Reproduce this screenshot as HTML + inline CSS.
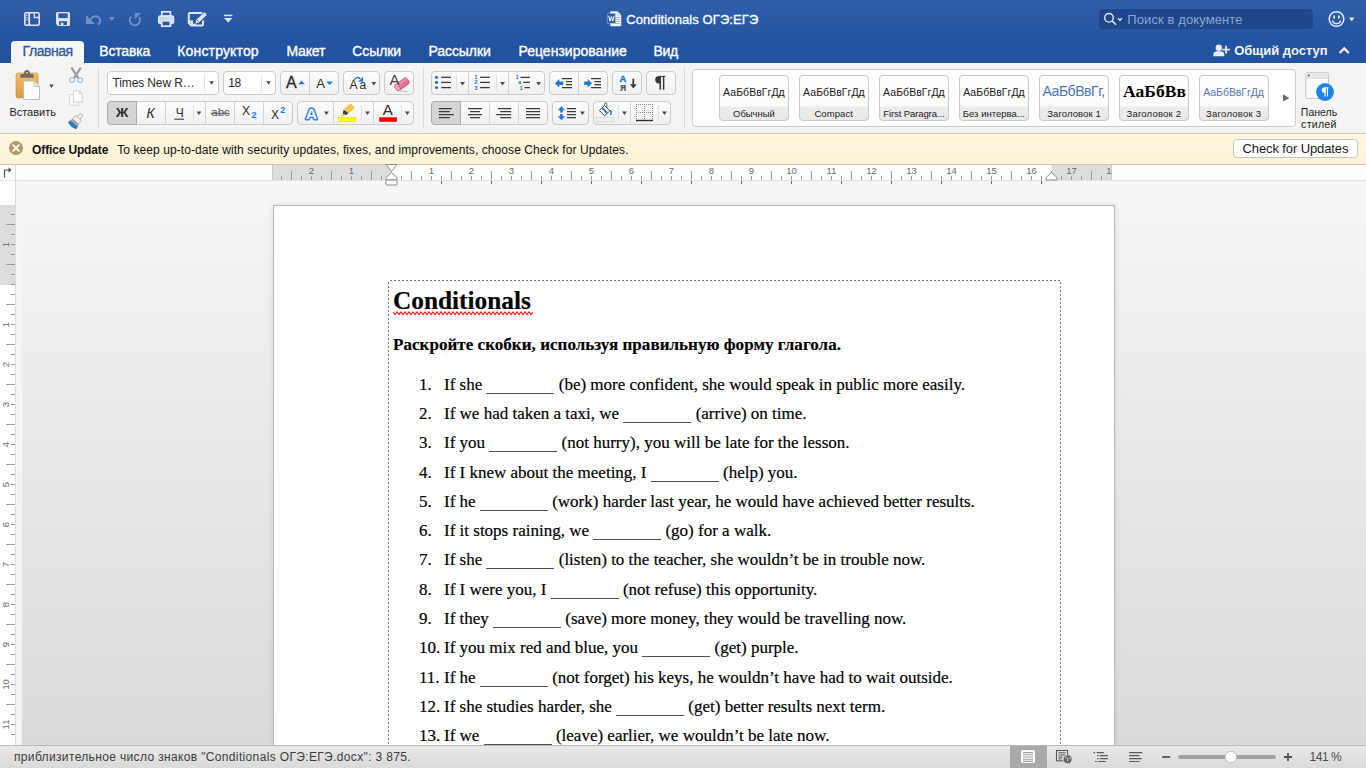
<!DOCTYPE html>
<html><head><meta charset="utf-8"><title>Conditionals</title>
<style>
*{box-sizing:border-box;margin:0;padding:0}
html,body{width:1366px;height:768px;overflow:hidden;background:#e6e6e6;font-family:"Liberation Sans",sans-serif;}
#root>div,#root>svg{position:absolute}
#root{position:relative;width:1366px;height:768px;overflow:hidden}
#titlebar{left:0;top:0;width:1366px;height:63px;background:linear-gradient(#2f5fa9 0,#2a5aa5 20px,#2354a1 40px,#2052a0 63px)}
.t{position:absolute;white-space:nowrap;line-height:1}
.tab{color:#fff;font-size:14px;top:44px;-webkit-text-stroke:0.35px #fff}
#tabactive{left:11px;top:41px;width:73px;height:23px;background:#f6f6f6;border-radius:4px 4px 0 0}
#ribbon{left:0;top:63px;width:1366px;height:70px;background:#f4f4f4}
#ribbonline{left:0;top:133px;width:1366px;height:1px;background:#cacaca}
#update{left:0;top:134px;width:1366px;height:30px;background:linear-gradient(#fff8dd,#fbf2d8)}
#updateline{left:0;top:164px;width:1366px;height:1px;background:#cdc5af}
#hruler{left:0;top:165px;width:1366px;height:16px;background:#fdfdfd;border-bottom:1px solid #e2e2e2}
#docarea{left:0;top:181px;width:1366px;height:564px;background:linear-gradient(#f6f6f6,#dadada)}
#page{left:273px;top:205px;width:842px;height:560px;background:#fff;border:1px solid #b8b8b8;border-bottom:none;box-shadow:0 0 7px rgba(0,0,0,0.10)}
#status{left:0;top:745px;width:1366px;height:23px;background:linear-gradient(#e8e8e8,#dadada);border-top:1px solid #b8b8b8}
.doc{font-family:"Liberation Serif",serif;color:#000;-webkit-text-stroke:0.18px #000}
.u{display:inline-block;width:68px;height:1.4px;background:#505050;vertical-align:-4.4px}

.g{background:linear-gradient(#fdfdfd,#f0f0f0);border:1px solid #cbcbcb;border-radius:4px}
.g1{top:71px;height:24px}
.g2{top:101px;height:24px}
.sel{background:#d5d5d5;border:1px solid #ababab}
.vd{width:1px;background:#d3d3d3}
.vl{width:1px;background:#e2e2e2}
.sep{top:68px;width:1px;height:61px;background:#dadada}
.rt{color:#2a2a2a}
.sc{top:75px;width:70px;height:46px;border:1px solid #c9c9c9;border-radius:4px;background:linear-gradient(#fff 0,#fbfbfb 30px,#ececec 31px,#e9e9e9 100%);overflow:hidden}
</style></head><body>
<div id="root" class="abs">
<!-- TITLEBAR -->
<div id="titlebar"></div>
<div id="ribbonline"></div>
<div id="update"></div>
<div id="updateline"></div>
<div id="hruler"></div>
<div id="docarea"></div>
<div id="page"></div>
<div id="tabactive"></div>
<svg id="tbicons" width="1366" height="63" viewBox="0 0 1366 63" style="left:0;top:0">
<g fill="none" stroke="#dfe6f2" stroke-width="1.6">
<!-- sidebar/doc icon -->
<rect x="24.8" y="12.800" width="14.400" height="12.400" rx="1.500"/>
<path d="M29.200 13v12" stroke-width="1.800"/>
<path d="M34.300 13.200v4.300h4.600" stroke-width="1.300"/>
</g>
<g fill="#dfe6f2"><rect x="26.200" y="14.500" width="1.300" height="1.300"/><rect x="26.200" y="16.800" width="1.300" height="1.300"/><rect x="26.200" y="19.100" width="1.300" height="1.300"/></g>
<!-- save -->
<path d="M57.500 12h11a1.500 1.500 0 0 1 1.500 1.500v11a1.500 1.500 0 0 1-1.500 1.500h-10.500l-2-2v-10.500a1.500 1.500 0 0 1 1.500-1.500z" fill="#dfe6f2"/>
<rect x="58.400" y="13.300" width="9.300" height="4.800" fill="#2c5ca7"/>
<rect x="59" y="21.200" width="8" height="3.900" fill="#2c5ca7"/>
<rect x="60.800" y="22.700" width="2.600" height="2.400" fill="#dfe6f2"/>
<!-- undo (dim) -->
<g fill="none" stroke="#7090c7" stroke-width="2">
<path d="M90.500 19.500c1.500-3 5.500-4.200 8-2.200c2.600 2 2.200 5.600-.8 7.200"/>
</g>
<path d="M86 15v9h9z" fill="#7090c7"/>
<path d="M109 17h5.600l-2.800 4z" fill="#7090c7"/>
<!-- redo (dim) -->
<path d="M131.200 16.600a5.100 5.100 0 1 0 7.800 0.500" fill="none" stroke="#7090c7" stroke-width="2"/>
<path d="M134.900 13.100h6.100l-6.100 5.800z" fill="#7090c7"/>
<!-- print -->
<g fill="none" stroke="#dfe6f2" stroke-width="1.700">
<rect x="161.800" y="11.800" width="8.600" height="4.400"/>
<path d="M161.500 23.300h-1.500a1.200 1.200 0 0 1-1.200-1.200v-4.600a1.300 1.300 0 0 1 1.300-1.300h12a1.300 1.300 0 0 1 1.300 1.300v4.600a1.200 1.200 0 0 1-1.200 1.200h-1.500" fill="#cdd7ea"/>
<rect x="161.800" y="20.800" width="8.600" height="5.400" fill="#2b5ba6"/>
</g>
<!-- edit -->
<path d="M202.500 13h-12.500a1.200 1.200 0 0 0-1.200 1.200v8.800l2.500 2.500h10.500a1.200 1.200 0 0 0 1.200-1.200v-3.800" fill="none" stroke="#dfe6f2" stroke-width="2"/>
<path d="M188.500 20.500h4.500v5.500z" fill="#dfe6f2"/>
<path d="M194.800 24.200l0.800-4.200l7.700-7.500a1.400 1.400 0 0 1 2 0l1.200 1.200a1.400 1.400 0 0 1 0 2l-7.700 7.500z" fill="#dfe6f2" stroke="#2b5ba6" stroke-width="1"/>
<path d="M196.600 19.800l2.600 2.600" stroke="#2b5ba6" stroke-width="0.800"/>
<path d="M192.500 24.500h3.500" stroke="#dfe6f2" stroke-width="1.500"/>
<!-- dropdown -->
<rect x="224" y="14.700" width="8.400" height="1.500" fill="#dfe6f2"/>
<path d="M224 18h8.400l-4.200 4.600z" fill="#dfe6f2"/>
<!-- word doc icon -->
<path d="M610.500 11.500h7l3.500 3.500v11h-10.500z" fill="#fff" stroke="#c9d3e6" stroke-width="0.600"/>
<path d="M617.500 11.500v3.500h3.500" fill="#e4e9f2" stroke="#9fb0cf" stroke-width="0.600"/>
<g stroke="#8d99ad" stroke-width="0.800"><path d="M615 17.500h5M615 19.500h5M615 21.500h5M615 23.500h5"/></g>
<rect x="607.300" y="13.300" width="8.200" height="10.200" rx="0.800" fill="#2b5baa" stroke="#dfe6f2" stroke-width="0.400"/>
<path d="M608.700 15.800l1.300 5.400l1.400-4.600l1.400 4.600l1.300-5.400" fill="none" stroke="#fff" stroke-width="1"/>
<!-- search box -->
<rect x="1099" y="9" width="214" height="20" rx="4" fill="#20478b"/>
<circle cx="1109" cy="17.800" r="4.300" fill="none" stroke="#e6ebf5" stroke-width="1.400"/>
<path d="M1112.200 21l3.800 3.800" stroke="#e6ebf5" stroke-width="1.600"/>
<path d="M1118 18.300l2 2l2-2" fill="none" stroke="#e6ebf5" stroke-width="1.300"/>
<!-- smiley -->
<circle cx="1336.500" cy="19" r="7.300" fill="none" stroke="#e6ebf5" stroke-width="1.500"/>
<rect x="1333.300" y="15.300" width="1.700" height="3.600" rx="0.800" fill="#e6ebf5"/>
<rect x="1338" y="15.300" width="1.700" height="3.600" rx="0.800" fill="#e6ebf5"/>
<path d="M1332.300 20.600a4.400 4.400 0 0 0 8.400 0" fill="none" stroke="#e6ebf5" stroke-width="1.400"/>
<path d="M1349 17.400h5.400l-2.700 3.800z" fill="#e6ebf5"/>
<!-- share person+ -->
<circle cx="1218.800" cy="47.800" r="3.200" fill="#e6ebf5"/>
<path d="M1213.300 56.200v-1.700c0-2.300 2-3.300 3.800-3.300h3.400c1.800 0 3.800 1 3.800 3.300v1.700z" fill="#e6ebf5"/>
<path d="M1226.100 45.800v7.600M1222.300 49.600h7.600" stroke="#e6ebf5" stroke-width="1.800"/>
<!-- caret -->
<path d="M1339.600 53l4.600-4.600l4.600 4.600" fill="none" stroke="#f2f5fa" stroke-width="2.200"/>
</svg>
<div class="t" id="ttl" style="left:626.2px;top:12.7px;font-size:13px;color:#fff;-webkit-text-stroke:0.3px #fff;letter-spacing:0.094px">Conditionals ОГЭ:ЕГЭ</div>
<div class="t" id="srch" style="left:1127.3px;top:12.500px;font-size:13px;color:#8fa5cb;letter-spacing:0.103px">Поиск в документе</div>
<div class="t tab" id="tab1" style="left:22.6px;color:#2b579a;-webkit-text-stroke:0.3px #2b579a;letter-spacing:-0.457px">Главная</div>
<div class="t tab" id="tab2" style="left:99.3px;letter-spacing:-0.178px">Вставка</div>
<div class="t tab" id="tab3" style="left:177.3px;letter-spacing:0.152px">Конструктор</div>
<div class="t tab" id="tab4" style="left:286.4px;letter-spacing:-0.145px">Макет</div>
<div class="t tab" id="tab5" style="left:352.2px;letter-spacing:-0.066px">Ссылки</div>
<div class="t tab" id="tab6" style="left:428.4px;letter-spacing:-0.055px">Рассылки</div>
<div class="t tab" id="tab7" style="left:518.4px;letter-spacing:0.021px">Рецензирование</div>
<div class="t tab" id="tab8" style="left:653.4px;letter-spacing:-0.276px">Вид</div>
<div class="t" id="share" style="left:1234.3px;top:44px;font-size:13px;font-weight:bold;color:#f2f5fa;letter-spacing:-0.036px">Общий доступ</div>
<!-- RIBBON -->
<div id="ribbon"></div>
<div class="g g1" style="left:107px;width:112px;background:#fff"></div>
<div class="g g1" style="left:223px;width:53px;background:#fff"></div>
<div class="g g1" style="left:280px;width:59px"></div>
<div class="g g1" style="left:343px;width:37px"></div>
<div class="g g1" style="left:384px;width:30px"></div>
<div class="g g1" style="left:431px;width:114px"></div>
<div class="g g1" style="left:549px;width:59px"></div>
<div class="g g1" style="left:612px;width:30px"></div>
<div class="g g1" style="left:646px;width:30px"></div>
<div class="g g2" style="left:107px;width:186px"></div>
<div class="g g2" style="left:297px;width:117px"></div>
<div class="g g2" style="left:431px;width:117px"></div>
<div class="g g2" style="left:552px;width:37px"></div>
<div class="g g2" style="left:593px;width:78px"></div>
<div class="sel" style="left:107px;top:101px;width:30px;height:24px;border-radius:4px 0 0 4px"></div>
<div class="sel" style="left:431px;top:101px;width:30px;height:24px;border-radius:4px 0 0 4px"></div>
<div class="vd" style="left:309px;top:72px;height:22px"></div>
<div class="vd" style="left:468px;top:72px;height:22px"></div>
<div class="vd" style="left:508px;top:72px;height:22px"></div>
<div class="vd" style="left:578px;top:72px;height:22px"></div>
<div class="vl" style="left:204px;top:75px;height:16px"></div>
<div class="vl" style="left:261px;top:75px;height:16px"></div>
<div class="vl" style="left:456px;top:75px;height:16px"></div>
<div class="vl" style="left:496px;top:75px;height:16px"></div>
<div class="vd" style="left:165px;top:102px;height:22px"></div>
<div class="vd" style="left:205px;top:102px;height:22px"></div>
<div class="vd" style="left:234px;top:102px;height:22px"></div>
<div class="vd" style="left:263px;top:102px;height:22px"></div>
<div class="vd" style="left:333px;top:102px;height:22px"></div>
<div class="vd" style="left:373px;top:102px;height:22px"></div>
<div class="vd" style="left:489px;top:102px;height:22px"></div>
<div class="vd" style="left:518px;top:102px;height:22px"></div>
<div class="vd" style="left:630px;top:102px;height:22px"></div>
<div class="vl" style="left:193px;top:105px;height:16px"></div>
<div class="vl" style="left:361px;top:105px;height:16px"></div>
<div class="vl" style="left:401px;top:105px;height:16px"></div>
<div class="vl" style="left:618px;top:105px;height:16px"></div>
<div class="vl" style="left:658px;top:105px;height:16px"></div>
<div class="sep" style="left:98px"></div>
<div class="sep" style="left:423px"></div>
<div class="sep" style="left:684px"></div>
<div style="left:692px;top:69px;width:604px;height:58px;background:#fff;border:1px solid #cfcfcf;border-radius:4px"></div>
<div class="sc" style="left:719px"></div>
<div class="sc" style="left:799px"></div>
<div class="sc" style="left:879px"></div>
<div class="sc" style="left:959px"></div>
<div class="sc" style="left:1039px"></div>
<div class="sc" style="left:1119px"></div>
<div class="sc" style="left:1199px"></div>
<svg id="rbicons" width="1366" height="165" viewBox="0 0 1366 165" style="left:0;top:0">
<defs><linearGradient id="gor" x1="0" y1="0" x2="0" y2="1"><stop offset="0" stop-color="#f3bd66"/><stop offset="1" stop-color="#dc9a3c"/></linearGradient></defs>
<rect x="16" y="73" width="22" height="25" rx="2" fill="url(#gor)" stroke="#d08f34" stroke-width="0.6"/>
<path d="M20.300 77.800v-2.200a1.600 1.600 0 0 1 1.600-1.600h2.200v-1a2.900 2.900 0 0 1 5.800 0v1h2.200a1.600 1.600 0 0 1 1.600 1.600v2.200z" fill="#6c6c6c"/>
<circle cx="27" cy="72.700" r="1" fill="#f1b862"/>
<path d="M23.500 81h10.500l5.500 5.500v13h-16z" fill="#fff" stroke="#b9b9b9" stroke-width="0.900"/>
<path d="M34 81v5.500h5.500" fill="#f0f0f0" stroke="#b9b9b9" stroke-width="0.900"/>
<path d="M49.2 84.4H53.9L51.55 88z" fill="#4d4d4d"/>
<g stroke="#9a9a9a" stroke-width="2.200" fill="none"><path d="M71.500 67.600l6.900 10.700M80.800 67.600l-6.900 10.700"/></g>
<g stroke="#9cc3ec" stroke-width="1.300" fill="#fff"><circle cx="72.100" cy="80.100" r="2.300"/><circle cx="80.200" cy="80.100" r="2.300"/></g>
<g fill="#fdfdfd" stroke="#d2d2d2" stroke-width="1"><path d="M69.700 94.500h8.500v10.800h-8.500z"/><path d="M73.500 90.700h5.800l3 3v8.300h-8.800z"/><path d="M79.300 90.700v3h3" fill="none"/></g>
<g transform="translate(76.300 120.800) rotate(40)"><rect x="-1.800" y="-8.300" width="3.600" height="5.500" rx="1.300" fill="#efefef" stroke="#9a9a9a" stroke-width="0.700"/><rect x="-3.900" y="-3.600" width="7.800" height="4.600" rx="0.600" fill="#f2f2f2" stroke="#a0a0a0" stroke-width="0.700"/><path d="M-4.200 1h8.400l0.700 2.300h-9.800z" fill="#b09e8a"/><path d="M-4.900 3.300h9.800l0.500 3c-3 1.600-7.800 1.600-10.800 0z" fill="#2777cf"/></g>
<path d="M209.2 81.3H214L211.6 84.7z" fill="#4d4d4d"/>
<path d="M266.2 81.3H270.9L268.54999999999995 84.7z" fill="#4d4d4d"/>
<path d="M298.2 84.3H304.8L301.5 80.5z" fill="#2079d6"/>
<path d="M326.3 81.5H332.9L329.6 85z" fill="#2079d6"/>
<path d="M354.300 80.200c0.500-2.600 3.800-3.800 6-1.500" fill="none" stroke="#2079d6" stroke-width="1.500"/><path d="M363.100 76.800v5h-4.900z" fill="#2079d6"/>
<path d="M371.3 82H376.2L373.75 85.5z" fill="#4d4d4d"/>
<g transform="rotate(-36 401.900 84.200)"><rect x="394.300" y="80.800" width="15" height="7" rx="2" fill="#dc7391" stroke="#c24d74" stroke-width="0.800"/><rect x="394.700" y="81.200" width="14.200" height="2.400" rx="1.200" fill="#e892a9"/><rect x="394.600" y="81.200" width="3.100" height="6.200" rx="1.500" fill="#f0a9bb"/></g>
<path d="M400.300 91.400h7.800" stroke="#bdbdbd" stroke-width="1"/>
<circle cx="436.500" cy="77.3" r="1.600" fill="#2079d6"/><path d="M441.200 77.3h9.700" stroke="#3a3a3a" stroke-width="1.300"/>
<circle cx="436.500" cy="82.4" r="1.600" fill="#2079d6"/><path d="M441.200 82.4h9.700" stroke="#3a3a3a" stroke-width="1.300"/>
<circle cx="436.500" cy="87.6" r="1.600" fill="#2079d6"/><path d="M441.200 87.6h9.700" stroke="#3a3a3a" stroke-width="1.300"/>
<path d="M460 82H465L462.5 85.5z" fill="#4d4d4d"/>
<path d="M480.100 77.3h9.700" stroke="#3a3a3a" stroke-width="1.300"/>
<path d="M480.100 82.4h9.700" stroke="#3a3a3a" stroke-width="1.300"/>
<path d="M480.100 87.6h9.700" stroke="#3a3a3a" stroke-width="1.300"/>
<path d="M500 82H505L502.5 85.5z" fill="#4d4d4d"/>
<path d="M520.500 77.300h9.400M523.200 82.400h6.700M524.500 87.600h5.400" stroke="#3a3a3a" stroke-width="1.300"/>
<path d="M536.2 82H541.1L538.6500000000001 85.5z" fill="#4d4d4d"/>
<path d="M555 83.300l4.300-4.300v2.600h4v3.400h-4v2.600z" fill="#2079d6"/>
<path d="M562 78.700h10M566 81.700h6M566 84.700h6M562 87.700h10" stroke="#3a3a3a" stroke-width="1.200"/>
<path d="M592 83.300l-4.300-4.300v2.600h-3.500v3.400h3.500v2.600z" fill="#2079d6"/>
<path d="M591 78.700h10M594.500 81.700h6.500M594.500 84.700h6.500M591 87.700h10" stroke="#3a3a3a" stroke-width="1.200"/>
<path d="M633.300 78.700v6.500" stroke="#3a3a3a" stroke-width="1.800"/><path d="M630 84.200h6.600l-3.300 4.300z" fill="#3a3a3a"/>
<path d="M660.200 76v13.700M663.600 76v13.700" stroke="#3a3a3a" stroke-width="1.500"/><path d="M661 76h-2a3.800 3.800 0 0 0 0 7.600h2z" fill="#3a3a3a"/><path d="M659 76.400h6.500" stroke="#3a3a3a" stroke-width="1"/>
<path d="M174.200 119.200h9.700" stroke="#3a3a3a" stroke-width="1.100"/>
<path d="M196.5 111.5H201.4L198.95 115z" fill="#4d4d4d"/>
<path d="M210.800 113.300h18.800" stroke="#555" stroke-width="1"/>
<text x="305.700" y="118.600" font-family="Liberation Sans" font-size="15.500" font-weight="bold" fill="#fff" stroke="#2b7fe2" stroke-width="3" stroke-linejoin="round" paint-order="stroke">A</text>
<path d="M324 111.5H328.9L326.45 115z" fill="#4d4d4d"/>
<rect x="338.500" y="117.500" width="17.300" height="4.100" fill="#ffff00" stroke="#dcdc00" stroke-width="0.600"/>
<path d="M344.400 109l5.200-4.600a1.200 1.200 0 0 1 1.600 0.100l2.600 2.500a1.200 1.200 0 0 1 0 1.600l-5.300 4.100z" fill="#f7c73c" stroke="#e3ac24" stroke-width="0.500"/><path d="M343.600 109.800l4.900 3.300l-2.300 1.900l-3.600-1.300z" fill="#3a3a3a"/><path d="M340.700 115.500l3.600-1.900l1 1.300l-3.200 1z" fill="#e9a91f"/>
<path d="M365 111.500H369.900L367.450 115z" fill="#4d4d4d"/>
<rect x="379.200" y="117.300" width="17.700" height="4.500" fill="#f40000"/>
<path d="M404.9 111.5H409.8L407.35 115z" fill="#4d4d4d"/>
<path d="M438.8 108.7H451.8M438.8 111.7H449.8M438.8 114.7H453.8M438.8 117.7H449.8" stroke="#3a3a3a" stroke-width="1.3"/>
<path d="M468 108.7H482M470 111.7H480M468 114.7H482M470 117.7H480" stroke="#3a3a3a" stroke-width="1.3"/>
<path d="M498 108.7H511.2M500.2 111.7H511.2M496.2 114.7H511.2M500.2 117.7H511.2" stroke="#3a3a3a" stroke-width="1.3"/>
<path d="M526 108.7H540M526 111.7H540M526 114.7H540M526 117.7H540" stroke="#3a3a3a" stroke-width="1.3"/>
<path d="M561.400 106.200l3.600 4h-2.300v2.300h-2.600v-2.300h-2.300z M561.400 120.200l3.600-4h-2.300v-2.300h-2.600v2.300h-2.300z" fill="#2079d6"/>
<path d="M567 108.7H576M567 111.7H576M567 114.7H576M567 117.7H576" stroke="#3a3a3a" stroke-width="1.3"/>
<path d="M580 111.5H584.9L582.45 115z" fill="#4d4d4d"/>
<rect x="596.500" y="117.500" width="17.200" height="4.200" fill="#eeeeee" stroke="#d6d6d6" stroke-width="0.800"/>
<path d="M599.300 110.500l5.200-5l5.300 5.300l-5.200 5z" fill="#fff" stroke="#4a4a4a" stroke-width="1"/><path d="M604.500 105.500v-1.300a1.200 1.200 0 0 1 2.400 0v3.300" fill="none" stroke="#4a4a4a" stroke-width="0.900"/><path d="M602 107.800l5.300 5.300" stroke="#2079d6" stroke-width="2"/><path d="M609.500 110.200c1.700 1 2 3 1 4.800" fill="none" stroke="#2079d6" stroke-width="1.500"/>
<path d="M622 111.5H626.9L624.45 115z" fill="#4d4d4d"/>
<path d="M636 104h1v1h-1zM636 106h1v1h-1zM636 108h1v1h-1zM636 110h1v1h-1zM636 112h1v1h-1zM636 114h1v1h-1zM636 116h1v1h-1zM636 118h1v1h-1zM638 104h1v1h-1zM638 112h1v1h-1zM640 104h1v1h-1zM640 112h1v1h-1zM642 104h1v1h-1zM642 112h1v1h-1zM644 104h1v1h-1zM644 106h1v1h-1zM644 108h1v1h-1zM644 110h1v1h-1zM644 112h1v1h-1zM644 114h1v1h-1zM644 116h1v1h-1zM644 118h1v1h-1zM646 104h1v1h-1zM646 112h1v1h-1zM648 104h1v1h-1zM648 112h1v1h-1zM650 104h1v1h-1zM650 112h1v1h-1zM652 104h1v1h-1zM652 106h1v1h-1zM652 108h1v1h-1zM652 110h1v1h-1zM652 112h1v1h-1zM652 114h1v1h-1zM652 116h1v1h-1zM652 118h1v1h-1z" fill="#868686"/><path d="M636 120.500h17" stroke="#2a2a2a" stroke-width="1.400"/>
<path d="M662 111.5H666.9L664.45 115z" fill="#4d4d4d"/>
<path d="M1283 94.200l6.300 3.700l-6.300 3.700z" fill="#6a6a6a"/>
<rect x="1305.800" y="72.800" width="22.800" height="25.600" rx="1.500" fill="#fcfcfc" stroke="#c2c2c2" stroke-width="1"/><rect x="1306.300" y="73.300" width="21.800" height="4.700" fill="#e6e6e6"/><path d="M1306 78.300h22.400" stroke="#cfcfcf" stroke-width="0.800"/><circle cx="1308.700" cy="75.500" r="1.100" fill="#6a6a6a"/>
<circle cx="1325" cy="92" r="8.900" fill="#1e84ea"/><path d="M1325.100 87.600v9M1327.400 87.600v9" stroke="#fff" stroke-width="1.100"/><path d="M1325.600 87.600h-1.200a2.600 2.600 0 0 0 0 5.200h1.200z" fill="#fff"/><path d="M1324.200 87.900h4.400" stroke="#fff" stroke-width="0.900"/>
<!-- update bar close icon -->
<circle cx="16" cy="148" r="7" fill="#b59968"/><path d="M13.200 145.200l5.600 5.600M18.800 145.200l-5.600 5.600" stroke="#fff" stroke-width="1.800" stroke-linecap="round"/>
</svg>
<div class="t rt" id="paste" style="left:9.4px;top:106.5px;font-size:11px;color:#1c1c1c;letter-spacing:-0.018px">Вставить</div>
<div class="t rt" id="fname" style="left:112.5px;top:76.8px;font-size:12px;letter-spacing:-0.122px">Times New R…</div>
<div class="t rt" id="fsize" style="left:228.2px;top:76.8px;font-size:12px;letter-spacing:-0.25px">18</div>
<div class="t rt" id="bigA" style="left:286px;top:75px;font-size:16px;-webkit-text-stroke:0.3px #2a2a2a">A</div>
<div class="t rt" id="smA" style="left:316.2px;top:77.3px;font-size:13px">A</div>
<div class="t rt" id="AaA" style="left:349.4px;top:78.6px;font-size:12px">A</div>
<div class="t rt" id="Aaa" style="left:359.6px;top:78.6px;font-size:12px">a</div>
<div class="t rt" id="erA" style="left:389.6px;top:72.3px;font-size:15px;color:#444">A</div>
<div class="t rt" id="bldZ" style="left:116px;top:106px;font-size:13.5px;font-weight:bold">Ж</div>
<div class="t rt" id="itK" style="left:146.6px;top:106px;font-size:14px;font-style:italic">К</div>
<div class="t rt" id="unC" style="left:175.8px;top:106.5px;font-size:12px">Ч</div>
<div class="t rt" id="abc" style="left:211.3px;top:107px;font-size:11.5px;color:#555">abc</div>
<div class="t rt" id="x1" style="left:241.9px;top:105px;font-size:12px">X</div>
<div class="t rt" id="x1s" style="left:251.4px;top:111.2px;font-size:9px;font-weight:bold;color:#2079d6">2</div>
<div class="t rt" id="x2" style="left:271px;top:108.5px;font-size:12px">X</div>
<div class="t rt" id="x2s" style="left:280.2px;top:106px;font-size:9px;font-weight:bold;color:#2079d6">2</div>
<div class="t rt" id="fcA" style="left:382.8px;top:102.4px;font-size:15px">A</div>
<div class="t rt" id="srtA" style="left:619.4px;top:74px;font-size:9.5px;font-weight:bold;color:#2079d6;-webkit-text-stroke:0.3px #2079d6">A</div>
<div class="t rt" id="srtYa" style="left:620.1px;top:83.8px;font-size:8.5px;font-weight:bold;color:#555;-webkit-text-stroke:0.2px #555">Я</div>
<div class="t rt" id="num0" style="left:474.3px;top:74.3px;font-size:6px;font-weight:bold;color:#2079d6">1</div>
<div class="t rt" id="num1" style="left:474.3px;top:79.4px;font-size:6px;font-weight:bold;color:#2079d6">2</div>
<div class="t rt" id="num2" style="left:474.3px;top:84.6px;font-size:6px;font-weight:bold;color:#2079d6">3</div>
<div class="t rt" id="ml1" style="left:515.5px;top:74.3px;font-size:6px;font-weight:bold;color:#2079d6">1</div>
<div class="t rt" id="ml2" style="left:518px;top:79.4px;font-size:6px;font-weight:bold;color:#2079d6">a</div>
<div class="t rt" id="ml3" style="left:519.5px;top:84.6px;font-size:6px;font-weight:bold;color:#2079d6">1</div>
<div class="t rt" id="sl0" style="left:733px;top:108.5px;font-size:9.5px;color:#222;letter-spacing:-0.014px">Обычный</div>
<div class="t rt" id="sl1" style="left:814.4px;top:108.5px;font-size:9.5px;color:#222;letter-spacing:0.083px">Compact</div>
<div class="t rt" id="sl2" style="left:883.2px;top:108.5px;font-size:9.5px;color:#222;letter-spacing:-0.096px">First Paragra...</div>
<div class="t rt" id="sl3" style="left:962.8px;top:108.5px;font-size:9.5px;color:#222;letter-spacing:0.006px">Без интерва...</div>
<div class="t rt" id="sl4" style="left:1047.2px;top:108.5px;font-size:9.5px;color:#222;letter-spacing:0.091px">Заголовок 1</div>
<div class="t rt" id="sl5" style="left:1126.5px;top:108.5px;font-size:9.5px;color:#222;letter-spacing:0.191px">Заголовок 2</div>
<div class="t rt" id="sl6" style="left:1206.1px;top:108.5px;font-size:9.5px;color:#222;letter-spacing:0.237px">Заголовок 3</div>
<div class="t rt" id="ss0" style="left:723.1px;top:86.5px;font-size:10.5px;color:#1a1a1a;letter-spacing:0.050px">АаБбВвГгДд</div>
<div class="t rt" id="ss1" style="left:803.1px;top:86.5px;font-size:10.5px;color:#1a1a1a;letter-spacing:0.050px">АаБбВвГгДд</div>
<div class="t rt" id="ss2" style="left:883.1px;top:86.5px;font-size:10.5px;color:#1a1a1a;letter-spacing:0.050px">АаБбВвГгДд</div>
<div class="t rt" id="ss3" style="left:963.2px;top:86.5px;font-size:10.5px;color:#1a1a1a;letter-spacing:0.030px">АаБбВвГгДд</div>
<div class="t rt" id="ss6" style="left:1203.3px;top:86.5px;font-size:10.5px;color:#5877b0;letter-spacing:-0.070px">АаБбВвГгДд</div>
<div class="t rt" id="ss5" style="left:1122.9px;top:83px;font-size:17.5px;font-family:'Liberation Serif',serif;font-weight:bold;color:#000;letter-spacing:0.115px">АаБбВв</div>
<div style="left:1040px;top:76px;width:68px;height:30px;overflow:hidden"><div class="t" id="ss4" style="left:2.500px;top:8.200px;font-size:14px;color:#4d76bb;letter-spacing:-0.45px">АаБбВвГг,</div></div>
<div class="t rt" id="pan1" style="left:1300.8px;top:107px;font-size:10.5px;color:#1c1c1c;letter-spacing:0.036px">Панель</div>
<div class="t rt" id="pan2" style="left:1301.1px;top:119.2px;font-size:10.5px;color:#1c1c1c;letter-spacing:0.289px">стилей</div>
<div class="t rt" id="upd1" style="left:32.1px;top:144px;font-size:12px;font-weight:bold;color:#111;letter-spacing:-0.147px">Office Update</div>
<div class="t rt" id="upd2" style="left:117.2px;top:144px;font-size:12px;color:#111;letter-spacing:0.085px">To keep up-to-date with security updates, fixes, and improvements, choose Check for Updates.</div>
<div style="left:1233px;top:139px;width:125px;height:19px;background:#fff;border:1px solid #c4c4c4;border-radius:3.5px"></div>
<div class="t rt" id="chk" style="left:1242.5px;top:141.5px;font-size:13px;color:#1a1a1a;letter-spacing:-0.110px">Check for Updates</div>
<!-- RIBBONTEXT -->
<svg id="rulers" width="1366" height="768" viewBox="0 0 1366 768" style="left:0;top:0;font-family:'Liberation Sans',sans-serif">
<rect x="272" y="165" width="119.500" height="15" fill="#dddddd"/>
<rect x="1051.500" y="165" width="60" height="15" fill="#dddddd"/>
<path d="M272.500 165v15" stroke="#c8c8c8" stroke-width="1"/><path d="M1111.500 165v15" stroke="#c8c8c8" stroke-width="1"/>
<path d="M281.5 176v4M301.5 176v4M311.5 176v4M321.5 176v4M341.5 176v4M351.5 176v4M361.5 176v4M381.5 176v4M391.5 176v4M401.5 176v4M421.5 176v4M431.5 176v4M441.5 176v4M461.5 176v4M471.5 176v4M481.5 176v4M501.5 176v4M511.5 176v4M521.5 176v4M541.5 176v4M551.5 176v4M561.5 176v4M581.5 176v4M591.5 176v4M601.5 176v4M621.5 176v4M631.5 176v4M641.5 176v4M661.5 176v4M671.5 176v4M681.5 176v4M701.5 176v4M711.5 176v4M721.5 176v4M741.5 176v4M751.5 176v4M761.5 176v4M781.5 176v4M791.5 176v4M801.5 176v4M821.5 176v4M831.5 176v4M841.5 176v4M861.5 176v4M871.5 176v4M881.5 176v4M901.5 176v4M911.5 176v4M921.5 176v4M941.5 176v4M951.5 176v4M961.5 176v4M981.5 176v4M991.5 176v4M1001.5 176v4M1021.5 176v4M1031.5 176v4M1041.5 176v4M1061.5 176v4M1071.5 176v4M1081.5 176v4M1101.5 176v4" stroke="#9a9a9a" stroke-width="1"/>
<path d="M291.5 171v9M331.5 171v9M371.5 171v9M411.5 171v9M451.5 171v9M491.5 171v9M531.5 171v9M571.5 171v9M611.5 171v9M651.5 171v9M691.5 171v9M731.5 171v9M771.5 171v9M811.5 171v9M851.5 171v9M891.5 171v9M931.5 171v9M971.5 171v9M1011.5 171v9M1051.5 171v9M1091.5 171v9" stroke="#9a9a9a" stroke-width="1"/>
<g font-size="9.5" fill="#6a6a6a" text-anchor="middle">
<text x="311.5" y="174">2</text>
<text x="351.5" y="174">1</text>
<text x="431.5" y="174">1</text>
<text x="471.5" y="174">2</text>
<text x="511.5" y="174">3</text>
<text x="551.5" y="174">4</text>
<text x="591.5" y="174">5</text>
<text x="631.5" y="174">6</text>
<text x="671.5" y="174">7</text>
<text x="711.5" y="174">8</text>
<text x="751.5" y="174">9</text>
<text x="791.5" y="174">10</text>
<text x="831.5" y="174">11</text>
<text x="871.5" y="174">12</text>
<text x="911.5" y="174">13</text>
<text x="951.5" y="174">14</text>
<text x="991.5" y="174">15</text>
<text x="1031.5" y="174">16</text>
<text x="1071.5" y="174">17</text>
</g>
<clipPath id="rc"><rect x="1090" y="164" width="21.500" height="16"/></clipPath><text x="1111.500" y="174" font-size="9.500" fill="#6a6a6a" text-anchor="middle" clip-path="url(#rc)">18</text>
<path d="M441.5 181v3M491.5 181v3M541.5 181v3M591.5 181v3M641.5 181v3M691.5 181v3M741.5 181v3M791.5 181v3M841.5 181v3M891.5 181v3M941.5 181v3M991.5 181v3M1041.5 181v3" stroke="#666" stroke-width="1"/>
<g fill="#fff" stroke="#8a8a8a" stroke-width="1"><path d="M386 164.500h11l-5.500 7z"/><path d="M391.500 172.500l5.500 5v2.500h-11v-2.500z"/><rect x="386" y="180" width="11" height="5" rx="1"/><path d="M1051.500 172.500l5.500 5v2.500h-11v-2.500z"/></g>
<rect x="0" y="181" width="15" height="564" fill="#fff"/>
<rect x="0" y="205" width="15" height="80" fill="#dddddd"/>
<path d="M15.500 165v580" stroke="#dcdcdc" stroke-width="1"/><rect x="16" y="181" width="6" height="564" fill="#f5f5f5"/>

<path d="M11 214.5h4M11 234.5h4M11 244.5h4M11 254.5h4M11 274.5h4M11 284.5h4M11 294.5h4M11 314.5h4M11 324.5h4M11 334.5h4M11 354.5h4M11 364.5h4M11 374.5h4M11 394.5h4M11 404.5h4M11 414.5h4M11 434.5h4M11 444.5h4M11 454.5h4M11 474.5h4M11 484.5h4M11 494.5h4M11 514.5h4M11 524.5h4M11 534.5h4M11 554.5h4M11 564.5h4M11 574.5h4M11 594.5h4M11 604.5h4M11 614.5h4M11 634.5h4M11 644.5h4M11 654.5h4M11 674.5h4M11 684.5h4M11 694.5h4M11 714.5h4M11 724.5h4M11 734.5h4" stroke="#9a9a9a" stroke-width="1"/>
<path d="M6 224.5h9M6 264.5h9M6 304.5h9M6 344.5h9M6 384.5h9M6 424.5h9M6 464.5h9M6 504.5h9M6 544.5h9M6 584.5h9M6 624.5h9M6 664.5h9M6 704.5h9" stroke="#9a9a9a" stroke-width="1"/>
<g font-size="9.500" fill="#6a6a6a" text-anchor="middle">
<text transform="translate(8.6 244.5) rotate(-90)" x="0" y="0">1</text>
<text transform="translate(8.6 324.5) rotate(-90)" x="0" y="0">1</text>
<text transform="translate(8.6 364.5) rotate(-90)" x="0" y="0">2</text>
<text transform="translate(8.6 404.5) rotate(-90)" x="0" y="0">3</text>
<text transform="translate(8.6 444.5) rotate(-90)" x="0" y="0">4</text>
<text transform="translate(8.6 484.5) rotate(-90)" x="0" y="0">5</text>
<text transform="translate(8.6 524.5) rotate(-90)" x="0" y="0">6</text>
<text transform="translate(8.6 564.5) rotate(-90)" x="0" y="0">7</text>
<text transform="translate(8.6 604.5) rotate(-90)" x="0" y="0">8</text>
<text transform="translate(8.6 644.5) rotate(-90)" x="0" y="0">9</text>
<text transform="translate(8.6 684.5) rotate(-90)" x="0" y="0">10</text>
<text transform="translate(8.6 724.5) rotate(-90)" x="0" y="0">11</text>
</g>
<path d="M4.500 177.500v-7.500h5" fill="none" stroke="#555" stroke-width="1.200"/><path d="M8.500 167.300l3 2.700l-3 2.700z" fill="#555"/>
</svg>
<div style="left:388px;top:282px;width:1px;height:463px;background:repeating-linear-gradient(to bottom,#7a7a7a 0,#7a7a7a 2px,transparent 2px,transparent 4px)"></div>
<div style="left:1060px;top:282px;width:1px;height:463px;background:repeating-linear-gradient(to bottom,#7a7a7a 0,#7a7a7a 2px,transparent 2px,transparent 4px)"></div>
<div style="left:390px;top:280px;width:670px;height:1px;background:repeating-linear-gradient(to right,#7a7a7a 0,#7a7a7a 2px,transparent 2px,transparent 4px)"></div>
<svg width="140" height="5" viewBox="0 0 140 5" style="left:393px;top:311px"><path d="M0 1L2 3.500L4 1L6 3.500L8 1L10 3.500L12 1L14 3.500L16 1L18 3.500L20 1L22 3.500L24 1L26 3.500L28 1L30 3.500L32 1L34 3.500L36 1L38 3.500L40 1L42 3.500L44 1L46 3.500L48 1L50 3.500L52 1L54 3.500L56 1L58 3.500L60 1L62 3.500L64 1L66 3.500L68 1L70 3.500L72 1L74 3.500L76 1L78 3.500L80 1L82 3.500L84 1L86 3.500L88 1L90 3.500L92 1L94 3.500L96 1L98 3.500L100 1L102 3.500L104 1L106 3.500L108 1L110 3.500L112 1L114 3.500L116 1L118 3.500L120 1L122 3.500L124 1L126 3.500L128 1L130 3.500L132 1L134 3.500L136 1L138 3.500L140 1" fill="none" stroke="#ff1414" stroke-width="1.200"/></svg>
<!-- DOCTEXT -->
<div id="doctext" class="doc">
<div class="t" id="h1" style="left:393px;top:288px;font-size:25.3px;font-weight:bold">Conditionals</div>
<div class="t" id="h2" style="left:393px;top:336px;font-size:17px;font-weight:bold;letter-spacing:0.045px">Раскройте скобки, используя правильную форму глагола.</div>
<div class="t li" id="n1" style="left:419px;top:376px;font-size:17px">1.</div>
<div class="t li" id="l1" style="left:444px;top:376px;font-size:17px">If she <span class="u"></span> (be) more confident, she would speak in public more easily.</div>
<div class="t li" id="n2" style="left:419px;top:405px;font-size:17px">2.</div>
<div class="t li" id="l2" style="left:444px;top:405px;font-size:17px">If we had taken a taxi, we <span class="u"></span> (arrive) on time.</div>
<div class="t li" id="n3" style="left:419px;top:434px;font-size:17px">3.</div>
<div class="t li" id="l3" style="left:444px;top:434px;font-size:17px">If you <span class="u"></span> (not hurry), you will be late for the lesson.</div>
<div class="t li" id="n4" style="left:419px;top:464px;font-size:17px">4.</div>
<div class="t li" id="l4" style="left:444px;top:464px;font-size:17px">If I knew about the meeting, I <span class="u"></span> (help) you.</div>
<div class="t li" id="n5" style="left:419px;top:493px;font-size:17px">5.</div>
<div class="t li" id="l5" style="left:444px;top:493px;font-size:17px">If he <span class="u"></span> (work) harder last year, he would have achieved better results.</div>
<div class="t li" id="n6" style="left:419px;top:522px;font-size:17px">6.</div>
<div class="t li" id="l6" style="left:444px;top:522px;font-size:17px">If it stops raining, we <span class="u"></span> (go) for a walk.</div>
<div class="t li" id="n7" style="left:419px;top:551px;font-size:17px">7.</div>
<div class="t li" id="l7" style="left:444px;top:551px;font-size:17px">If she <span class="u"></span> (listen) to the teacher, she wouldn’t be in trouble now.</div>
<div class="t li" id="n8" style="left:419px;top:581px;font-size:17px">8.</div>
<div class="t li" id="l8" style="left:444px;top:581px;font-size:17px">If I were you, I <span class="u"></span> (not refuse) this opportunity.</div>
<div class="t li" id="n9" style="left:419px;top:610px;font-size:17px">9.</div>
<div class="t li" id="l9" style="left:444px;top:610px;font-size:17px">If they <span class="u"></span> (save) more money, they would be travelling now.</div>
<div class="t li" id="n10" style="left:419px;top:639px;font-size:17px">10.</div>
<div class="t li" id="l10" style="left:444px;top:639px;font-size:17px">If you mix red and blue, you <span class="u"></span> (get) purple.</div>
<div class="t li" id="n11" style="left:419px;top:669px;font-size:17px">11.</div>
<div class="t li" id="l11" style="left:444px;top:669px;font-size:17px">If he <span class="u"></span> (not forget) his keys, he wouldn’t have had to wait outside.</div>
<div class="t li" id="n12" style="left:419px;top:698px;font-size:17px">12.</div>
<div class="t li" id="l12" style="left:444px;top:698px;font-size:17px">If she studies harder, she <span class="u"></span> (get) better results next term.</div>
<div class="t li" id="n13" style="left:419px;top:727px;font-size:17px">13.</div>
<div class="t li" id="l13" style="left:444px;top:727px;font-size:17px">If we <span class="u"></span> (leave) earlier, we wouldn’t be late now.</div>
</div>
<div id="status"></div>
<div style="left:1010px;top:746px;width:37px;height:22px;background:#a9a9a9"></div>
<svg width="1366" height="23" viewBox="0 745 1366 23" style="left:0;top:745px">
<rect x="1021.500" y="750.500" width="13" height="12" rx="0.800" fill="#fff" stroke="#fff" stroke-width="1"/>
<path d="M1023 752.6h10M1023 754.8000000000001h10M1023 757.0h10M1023 759.2h10M1023 761.4h10" stroke="#a0a0a0" stroke-width="1.100"/>
<rect x="1056.500" y="750.500" width="11" height="10.300" fill="#e4e4e4" stroke="#555" stroke-width="1.100"/>
<path d="M1058.500 752.800h7M1058.500 755h7M1058.500 757.200h4M1058.500 759h3" stroke="#555" stroke-width="1"/>
<circle cx="1067.700" cy="759.300" r="4.500" fill="#666" stroke="#e2e2e2" stroke-width="0.800"/>
<path d="M1065.300 757.500c1-0.500 2 0 2.500 1c0.300 1-0.500 1.500-0.200 2.700M1069.500 757c0.800 0.800 0.500 2 1.500 2.500" stroke="#d5d5d5" stroke-width="1" fill="none"/>
<path d="M1093.400 752.700h1.700M1096.700 752.700h7.200M1097.200 755.700h1.400M1099.700 755.700h8.200M1097.200 758.600h1.400M1099.700 758.600h8.200M1095 761.500h1.700M1098.300 761.500h7.400" stroke="#5a5a5a" stroke-width="1.200"/>
<path d="M1129.100 752.700h13.200M1129.100 755.700h10.400M1129.100 758.600h12.600M1129.100 761.500h10.400" stroke="#5a5a5a" stroke-width="1.200"/>
<path d="M1162.200 757h8" stroke="#555" stroke-width="1.800"/>
<path d="M1180 757h94" stroke="#a3a3a3" stroke-width="4" stroke-linecap="round"/>
<circle cx="1231" cy="757" r="5.800" fill="#fff" stroke="#b5b5b5" stroke-width="0.800"/>
<path d="M1284 757h8M1288 753v8" stroke="#555" stroke-width="1.800"/>
</svg>
<div class="t" id="st1" style="left:14px;top:751px;font-size:12px;color:#3c3c3c;letter-spacing:0.351px">приблизительное число знаков "Conditionals ОГЭ:ЕГЭ.docx": 3 875.</div>
<div class="t" id="st2" style="left:1309.5px;top:751px;font-size:12px;color:#4a4a4a;letter-spacing:-0.486px">141 %</div>
</div>
</body></html>
